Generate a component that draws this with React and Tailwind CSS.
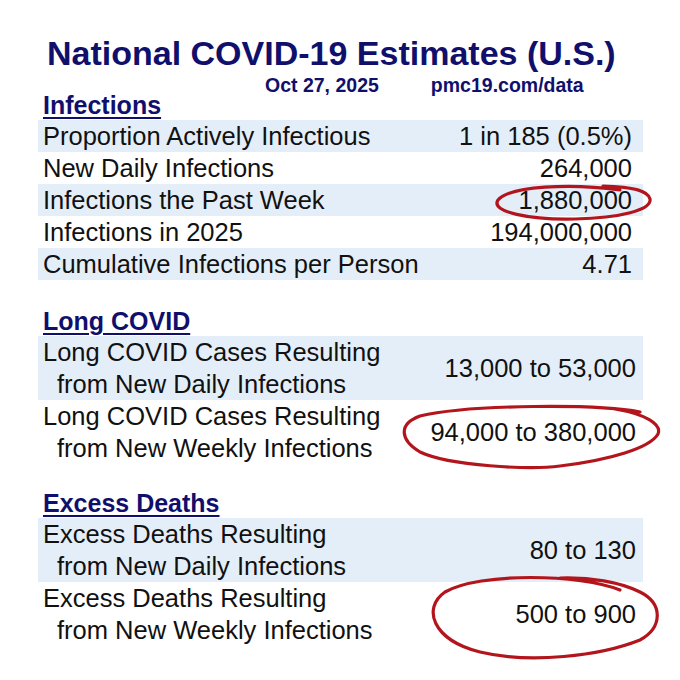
const infections = [
  ["Proportion Actively Infectious", "1 in 185 (0.5%)"],
  ["New Daily Infections", "264,000"],
  ["Infections the Past Week", "1,880,000"],
  ["Infections in 2025", "194,000,000"],
  ["Cumulative Infections per Person", "4.71"],
];

const longCovid = [
  ["Long COVID Cases Resulting", "from New Daily Infections", "13,000 to 53,000"],
  ["Long COVID Cases Resulting", "from New Weekly Infections", "94,000 to 380,000"],
];

const deaths = [
  ["Excess Deaths Resulting", "from New Daily Infections", "80 to 130"],
  ["Excess Deaths Resulting", "from New Weekly Infections", "500 to 900"],
];

function Heading({ children, className }) {
  return (
    <h2
      className={
        "pl-[5px] text-[25px] leading-[24px] font-bold text-[#10106c] underline decoration-2 underline-offset-[3px] mb-[3px] " +
        (className || "")
      }
    >
      {children}
    </h2>
  );
}

function Row({ label, value, shaded }) {
  return (
    <div
      className={
        "flex justify-between items-center h-[32px] pl-[5px] pr-[11px] " +
        (shaded ? "bg-[#e4eef9]" : "")
      }
    >
      <span>{label}</span>
      <span>{value}</span>
    </div>
  );
}

function TwoLineRow({ first, second, value, shaded }) {
  return (
    <div
      className={
        "flex justify-between items-center pl-[5px] pr-[7px] " +
        (shaded ? "bg-[#e4eef9]" : "")
      }
    >
      <div className="flex flex-col">
        <span>{first}</span>
        <span className="pl-[14px]">{second}</span>
      </div>
      <span>{value}</span>
    </div>
  );
}

function Circles() {
  return (
    <svg
      className="absolute inset-0 pointer-events-none"
      width="680"
      height="680"
      viewBox="0 0 680 680"
      fill="none"
      stroke="#b2161c"
      strokeWidth="3.2"
      strokeLinecap="round"
      strokeLinejoin="round"
    >
      <path d="M 620 190 C 570 183, 510 186, 498 200 C 490 212, 530 220, 575 219 C 620 218, 652 210, 650 199 C 648 191, 635 187, 603 186" />
      <path d="M 640 412 C 600 404, 470 404, 420 416 C 398 424, 400 440, 420 452 C 450 466, 530 470, 560 466 C 610 460, 650 448, 658 434 C 662 424, 645 414, 615 409" />
      <path d="M 620 590 C 580 574, 480 572, 445 592 C 422 608, 432 640, 480 652 C 530 664, 600 656, 640 640 C 662 628, 664 604, 640 592 C 620 582, 590 577, 560 578" />
    </svg>
  );
}

export default function App() {
  return (
    <div className="relative w-[680px] h-[680px] bg-white overflow-hidden font-['Liberation_Sans',Arial,sans-serif] text-[#111]">
      <div className="ml-[38px] w-[605px] flex flex-col">
        <h1 className="pt-[33px] pl-[9px] text-[34px] leading-[40px] font-bold text-[#10106c]">
          National COVID-19 Estimates (U.S.)
        </h1>
        <div className="mt-[5px] pl-[227px] flex gap-[52px] text-[19.5px] leading-[15px] font-bold text-[#10106c]">
          <span>Oct 27, 2025</span>
          <span>pmc19.com/data</span>
        </div>

        <Heading>Infections</Heading>
        <div className="text-[25.5px] leading-[32px]">
          {infections.map(([label, value], i) => (
            <Row key={label} label={label} value={value} shaded={i % 2 === 0} />
          ))}
        </div>

        <Heading className="mt-[29px]">Long COVID</Heading>
        <div className="text-[25.5px] leading-[32px]">
          {longCovid.map(([a, b, v], i) => (
            <TwoLineRow key={b} first={a} second={b} value={v} shaded={i === 0} />
          ))}
        </div>

        <Heading className="mt-[27px]">Excess Deaths</Heading>
        <div className="text-[25.5px] leading-[32px]">
          {deaths.map(([a, b, v], i) => (
            <TwoLineRow key={b} first={a} second={b} value={v} shaded={i === 0} />
          ))}
        </div>
      </div>
      <Circles />
    </div>
  );
}
